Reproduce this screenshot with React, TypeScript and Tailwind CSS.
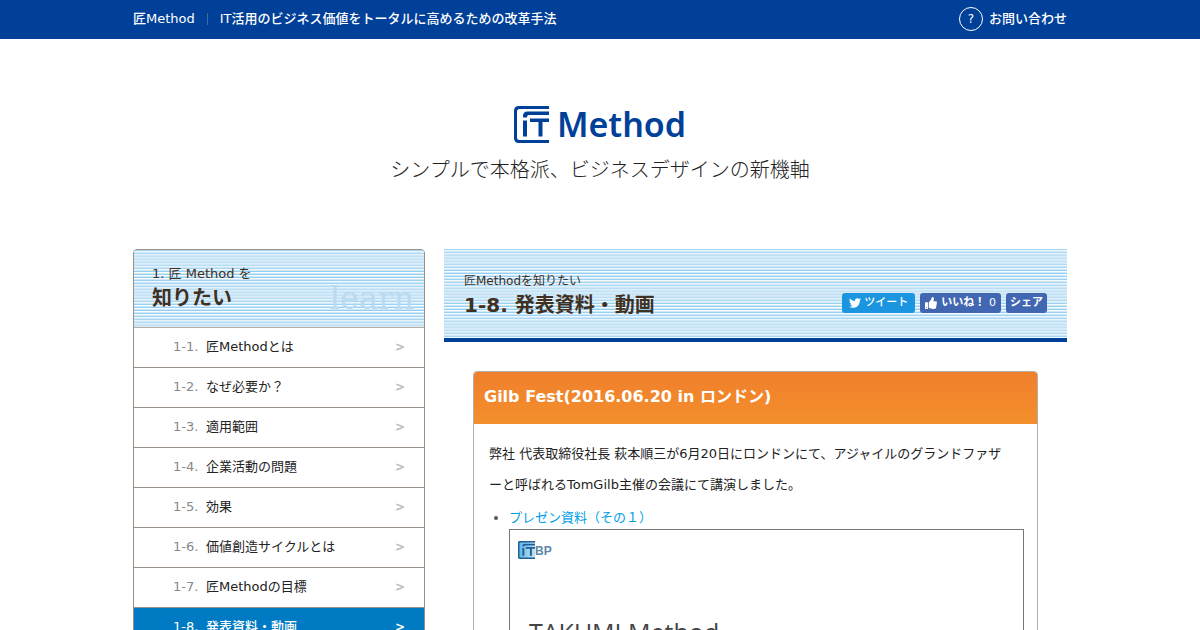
import { FaThumbsUp, FaTwitter } from "react-icons/fa";

const stripes =
  "bg-[repeating-linear-gradient(to_bottom,#cfe7f760_0px,#cfe7f7d0_8px,#cfe7f7d0_13px,#cfe7f720_22px,#cfe7f720_28px,#cfe7f760_34px),repeating-linear-gradient(to_bottom,#8accf2_0px,#8accf2_1px,#ffffff_1px,#ffffff_2px,#d0e9f9_2px,#d0e9f9_3px)]";

const items = [
  "匠Methodとは",
  "なぜ必要か？",
  "適用範囲",
  "企業活動の問題",
  "効果",
  "価値創造サイクルとは",
  "匠Methodの目標",
  "発表資料・動画",
];

function Mark({ className }: { className: string }) {
  return (
    <svg className={className} viewBox="0 0 35 37" fill="currentColor" aria-hidden="true">
      <path d="M35 0H5Q0 0 0 5V32Q0 37 5 37H35V34H5.5Q3 34 3 31.5V5.5Q3 3 5.5 3H35Z" />
      <path d="M35 5.5H13.5Q9 5.5 9 10V11.5H13V11Q13 9 15 9H35Z" />
      <path d="M9 14.5H13V30.5H9ZM16 12.5H35V16H28.5V30.5H24.5V16H16Z" />
    </svg>
  );
}

function TopBar() {
  return (
    <header className="bg-[#004098] text-white">
      <div className="mx-auto flex h-[39px] max-w-[934px] items-center justify-between pb-0.5 font-medium">
        <div className="flex items-center">
          <a href="#top">匠Method</a>
          <span className="mx-3 h-3 w-px bg-[#3d6d9c]" />
          <span>IT活用のビジネス価値をトータルに高めるための改革手法</span>
        </div>
        <a href="#contact" className="flex items-center gap-1.5">
          <span className="flex size-6 items-center justify-center rounded-full border border-white text-xs">?</span>
          お問い合わせ
        </a>
      </div>
    </header>
  );
}

function Sidebar() {
  return (
    <nav className="w-[292px] shrink-0 overflow-hidden rounded-t border border-[#9a9089]">
      <div className={`flex h-[78px] items-end justify-between border-b border-[#b5aaa4] px-[18px] pb-[15px] ${stripes}`}>
        <h2 className="text-[#40301f]">
          <span className="block text-[13px] leading-5">1. 匠 Method を</span>
          <span className="block text-xl leading-7 font-bold">知りたい</span>
        </h2>
        <span className="-mr-2 font-['DejaVu_Serif',serif] text-[32px] leading-7 font-normal text-[#b9daf0]">learn</span>
      </div>
      <ul>
        {items.map((item, i) => {
          const active = i === 7;
          return (
            <li key={item} className="border-b border-[#9a9089]">
              <a
                href={`#section-${i + 1}`}
                className={`flex h-[39px] items-center pr-[19px] pb-0.5 pl-[39px] ${active ? "bg-[#007ac3] font-medium text-white" : "text-[#222]"}`}
              >
                <span className={`w-[33px] ${active ? "" : "text-[#888]"}`}>1-{i + 1}.</span>
                <span className="flex-1">{item}</span>
                <span className={`text-xs font-bold ${active ? "" : "text-[#bbb]"}`}>&gt;</span>
              </a>
            </li>
          );
        })}
      </ul>
    </nav>
  );
}

function PageHeader() {
  return (
    <div className={`flex h-[93px] items-end justify-between border-b-4 border-[#004098] px-5 ${stripes}`}>
      <div className="pb-[19px] text-[#40301f]">
        <p className="text-xs leading-5">匠Methodを知りたい</p>
        <h1 className="text-xl leading-7 font-bold">1-8. 発表資料・動画</h1>
      </div>
      <div className="flex gap-[5px] pb-[25px] text-[11px] font-bold text-white">
        <button className="flex h-5 items-center gap-[3px] rounded-[3px] bg-[#1b95e0] px-[7px] font-medium">
          <FaTwitter className="size-3" />
          ツイート
        </button>
        <button className="flex h-5 items-center gap-1 rounded-[3px] bg-[#4267b2] px-[5px]">
          <FaThumbsUp className="size-3" />
          <span>
            いいね！ <span className="font-medium">0</span>
          </span>
        </button>
        <button className="h-5 rounded-[3px] bg-[#4267b2] px-1">シェア</button>
      </div>
    </div>
  );
}

function Article() {
  return (
    <article className="mt-[29px] mr-[29px] ml-[29px] overflow-hidden rounded-t border border-[#b5aeab]">
      <h2 className="flex h-[52px] items-center bg-linear-to-b from-[#f07f2c] to-[#f38f2c] px-[10px] pb-0.5 text-base font-bold text-white">
        Gilb Fest(2016.06.20 in ロンドン)
      </h2>
      <div className="pt-[14px] pr-[13px] pl-[15px]">
        <p className="leading-[31px] text-[#222]">
          弊社 代表取締役社長 萩本順三が6月20日にロンドンにて、アジャイルのグランドファザ
          <br />
          ーと呼ばれるTomGilb主催の会議にて講演しました。
        </p>
        <ul className="list-disc pt-2 pl-5 text-[#555]">
          <li>
            <a href="#slides" className="leading-5 text-[#009fe8]">
              プレゼン資料（その１）
            </a>
            <div className="mt-px h-96 border border-[#777] bg-white px-2 pt-[11px]">
              <div className="flex items-center text-[#2c6896]">
                <span className="bg-linear-to-r from-[#5ab4e0] to-[#c4e2f2]">
                  <Mark className="h-[18px] w-[17px] text-[#1d5f9a]" />
                </span>
                <span className="pt-0.5 font-['Liberation_Sans',sans-serif] text-xs font-bold text-[#5d86a8]">BP</span>
              </div>
              <p className="pt-[55px] pl-[11px] font-['Open_Sans',sans-serif] text-[25px] leading-9 text-[#444]">
                TAKUMI Method
              </p>
            </div>
          </li>
        </ul>
      </div>
    </article>
  );
}

export default function App() {
  return (
    <div
      lang="ja"
      className="h-screen overflow-hidden bg-white font-['DejaVu_Sans','Noto_Sans_CJK_JP',sans-serif] text-[13px] leading-5"
    >
      <TopBar />
      <div className="flex flex-col items-center pt-[67px] pb-16">
        <div className="flex items-center gap-2 text-[#004098]">
          <Mark className="h-[37px] w-[35px]" />
          <span className="font-['Noto_Sans',sans-serif] text-[34px] leading-[37px] font-semibold">Method</span>
        </div>
        <p className="mt-[13px] text-xl leading-[29px] font-light text-[#222]">シンプルで本格派、ビジネスデザインの新機軸</p>
      </div>
      <div className="mx-auto flex max-w-[934px] items-start gap-[19px]">
        <Sidebar />
        <main className="min-w-0 flex-1">
          <PageHeader />
          <Article />
        </main>
      </div>
    </div>
  );
}
